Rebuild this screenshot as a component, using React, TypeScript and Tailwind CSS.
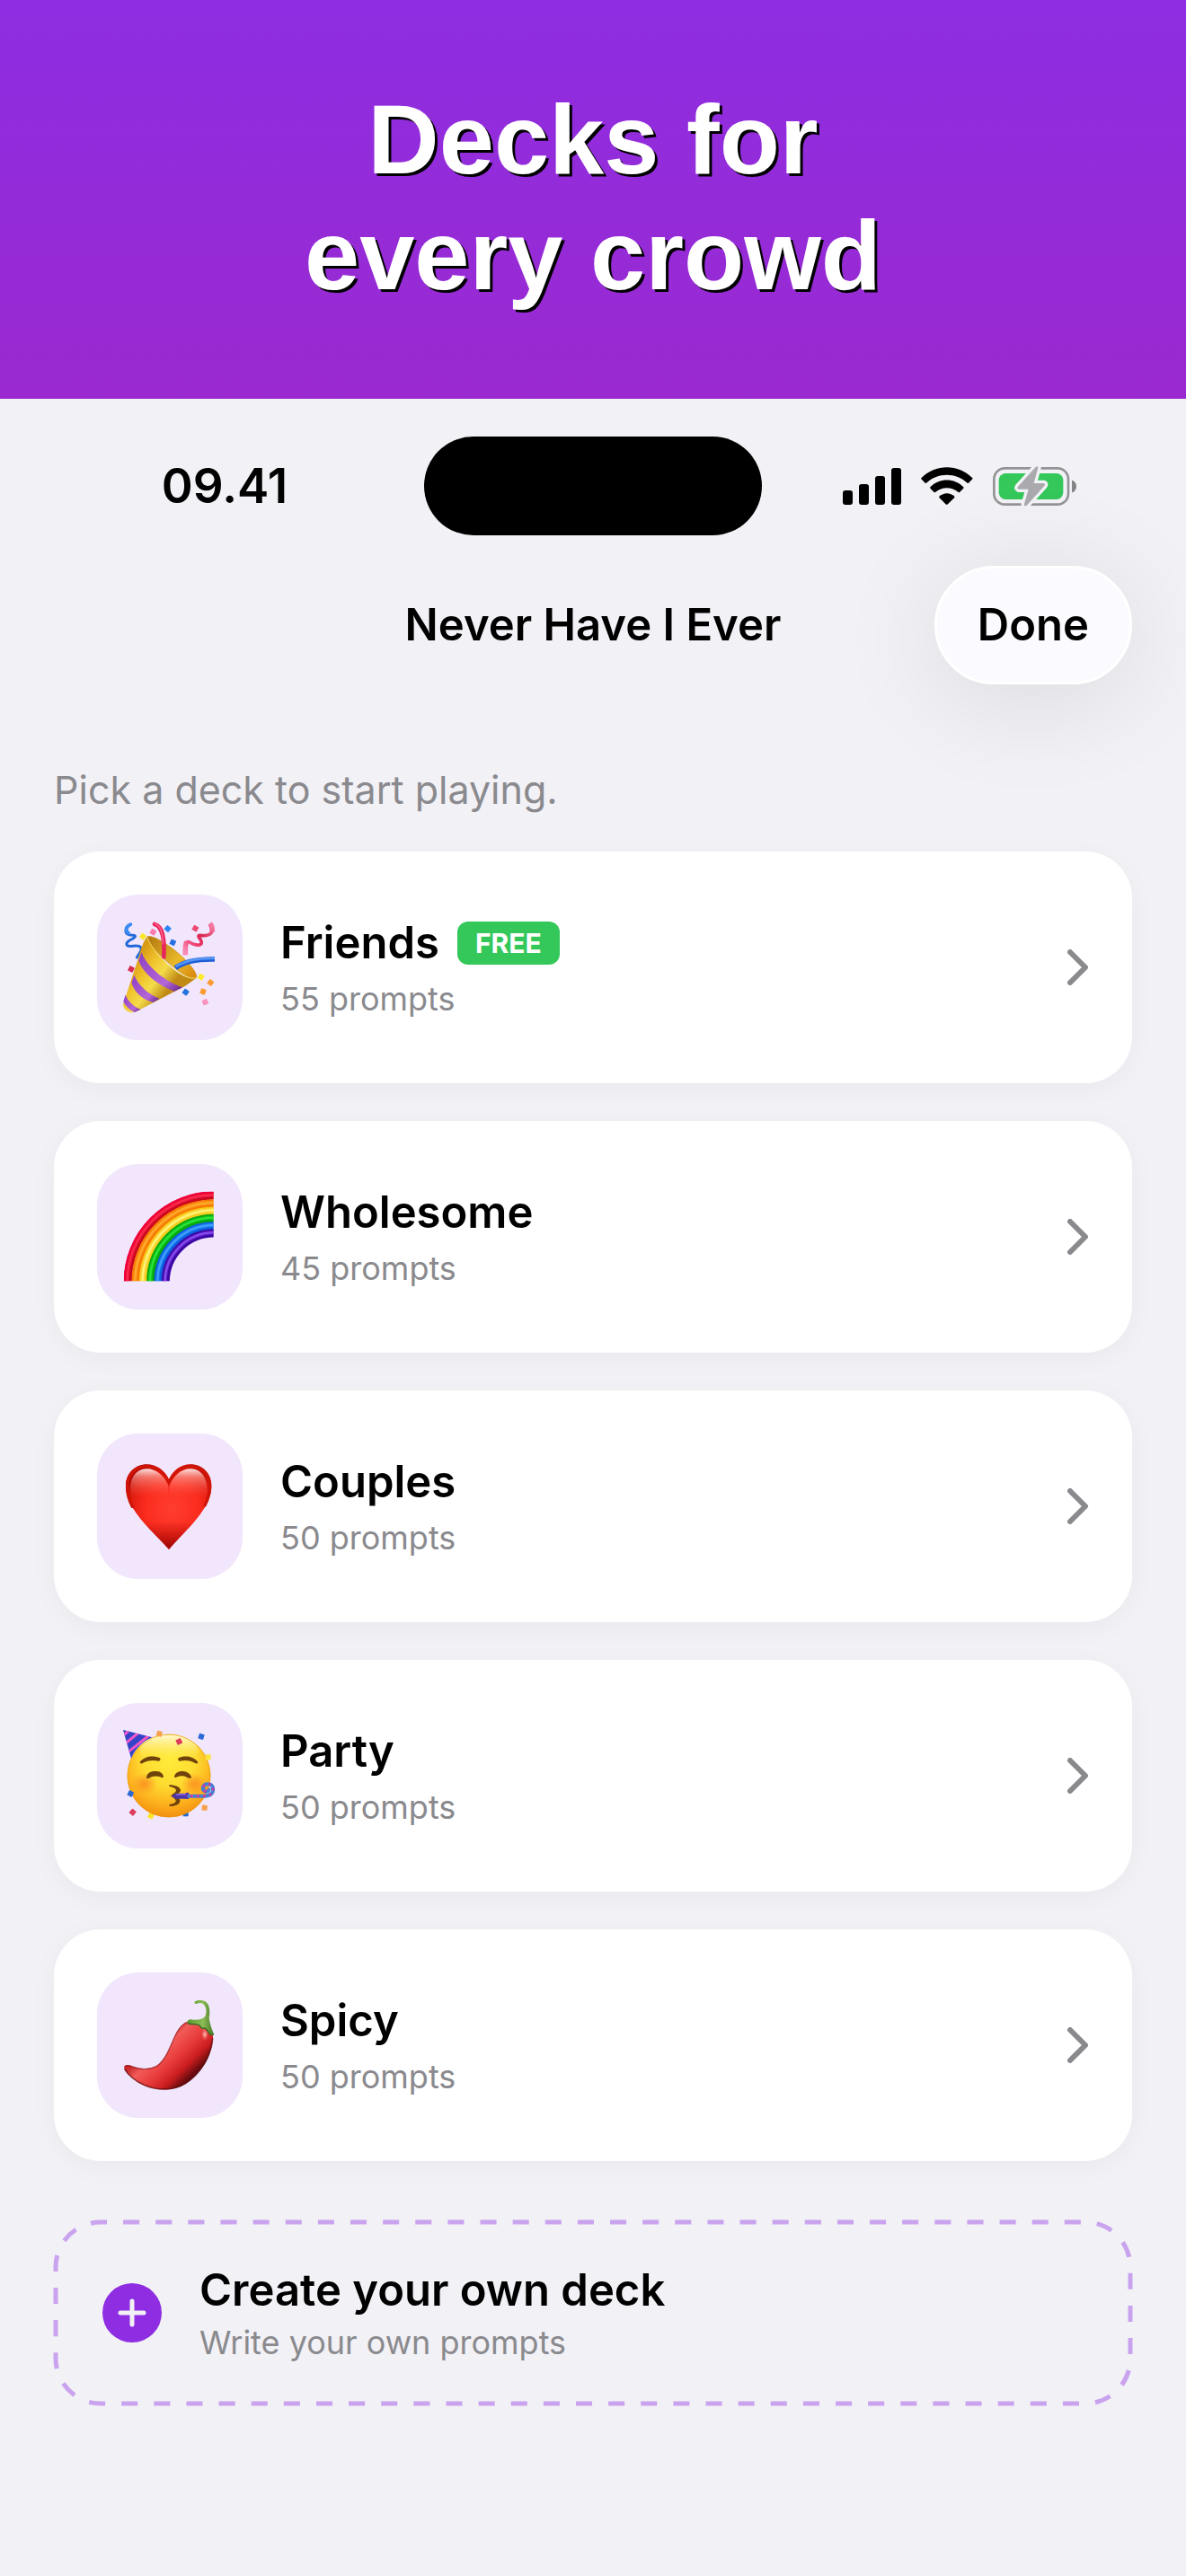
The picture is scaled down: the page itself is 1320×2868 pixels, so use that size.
import { useState } from 'react';
import type { ReactNode } from 'react';

type Deck = {
  id: string;
  name: string;
  prompts: number;
  free?: boolean;
  icon: ReactNode;
};

const TILE_VIEW_BOX = '54 48 486 486';

function Confetti({ x, y, fill, r = 0 }: { x: number; y: number; fill: string; r?: number }) {
  return <rect x={x - 9} y={y - 9} width="18" height="18" rx="2" fill={fill} transform={`rotate(${r} ${x} ${y})`} />;
}

function PopperIcon() {
  return (
    <svg viewBox={TILE_VIEW_BOX} className="size-full" aria-hidden="true">
      <defs>
        <linearGradient id="cone" x1="170" y1="280" x2="290" y2="370" gradientUnits="userSpaceOnUse">
          <stop offset="0" stopColor="#d99a16" />
          <stop offset=".35" stopColor="#f0c32c" />
          <stop offset=".65" stopColor="#f4dc4a" />
          <stop offset="1" stopColor="#c08a14" />
        </linearGradient>
        <linearGradient id="mouth" x1="230" y1="200" x2="380" y2="320" gradientUnits="userSpaceOnUse">
          <stop offset="0" stopColor="#b87e12" />
          <stop offset=".6" stopColor="#e9b92a" />
          <stop offset="1" stopColor="#d98a10" />
        </linearGradient>
        <linearGradient id="band" x1="0" y1="0" x2="1" y2="1">
          <stop offset="0" stopColor="#8d3fc4" />
          <stop offset=".7" stopColor="#b566d8" />
          <stop offset="1" stopColor="#5f1f86" />
        </linearGradient>
        <linearGradient id="pinkRibbon" x1="350" y1="240" x2="440" y2="150" gradientUnits="userSpaceOnUse">
          <stop offset="0" stopColor="#f98bb4" />
          <stop offset=".35" stopColor="#ee3a6c" />
          <stop offset=".6" stopColor="#d8284f" />
          <stop offset="1" stopColor="#f77fa8" />
        </linearGradient>
      </defs>
      <path d="M167 147C143 157 145 180 166 183C184 184 186 187 174 195C158 202 148 210 155 218C165 225 190 213 200 224C206 235 195 243 187 258" fill="none" stroke="#2169d8" strokeWidth="9" strokeLinecap="round" strokeLinejoin="round" />
      <path d="M165 148C149 156 149 171 160 177" fill="none" stroke="#3c8cf5" strokeWidth="11" strokeLinecap="round" />
      <path d="M221 189C234 182 268 200 303 226C346 258 390 306 386 325C382 335 355 325 318 297C268 258 214 206 221 189Z" fill="url(#mouth)" stroke="#c98f14" strokeWidth="2" />
      <path d="M221 188C208 205 199 233 194 254L142 412C139 426 153 443 170 442C180 441 190 436 199 431L351 352L386 326C362 336 316 308 282 274C250 242 226 210 221 188Z" fill="url(#cone)" />
      <path d="M203 240C217 286 278 337 340 358L312 371C257 352 206 309 193 268Z" fill="url(#band)" />
      <path d="M178 317C191 350 228 383 263 395L241 408C205 399 176 371 169 342Z" fill="url(#band)" />
      <path d="M149 383C157 404 178 424 200 431L180 441C162 433 146 417 142 404Z" fill="url(#band)" />
      <path d="M221 190C229 215 258 251 286 277C320 309 363 334 385 326" fill="none" stroke="#f8e06a" strokeWidth="3" />
      <path d="M246 147C272 154 280 190 277 256" fill="none" stroke="#e8265c" strokeWidth="14" strokeLinecap="round" />
      <path d="M248 145C268 154 274 180 274 212" fill="none" stroke="#fa5c88" strokeWidth="5" strokeLinecap="round" />
      <path d="M316 293C341 274 386 263 447 264" fill="none" stroke="#1e5fd6" strokeWidth="17" />
      <path d="M318 288C345 270 390 260 447 261" fill="none" stroke="#5696f6" strokeWidth="8" />
      <path d="M349 248C348 210 352 202 362 207C378 217 402 222 403 208C402 194 385 187 397 184C419 187 441 182 439 163Q438 152 432 145" fill="none" stroke="url(#pinkRibbon)" strokeWidth="11" strokeLinejoin="round" />
      <path d="M349 250C348 225 348 214 353 207M439 172Q440 155 431 144" fill="none" stroke="url(#pinkRibbon)" strokeWidth="17" />
      <Confetti x={207} y={188} fill="#fbe929" r={38} />
      <Confetti x={241} y={173} fill="#fb79ac" r={30} />
      <Confetti x={290} y={162} fill="#2d86f8" r={40} />
      <Confetti x={307} y={208} fill="#256fe0" r={25} />
      <Confetti x={382} y={161} fill="#ee4a76" r={30} />
      <Confetti x={168} y={297} fill="#d72c52" r={28} />
      <Confetti x={350} y={374} fill="#2572dc" r={35} />
      <Confetti x={401} y={323} fill="#fcec2c" r={28} />
      <Confetti x={433} y={342} fill="#fb9c32" r={38} />
      <Confetti x={408} y={372} fill="#fb9c32" r={22} />
      <Confetti x={415} y={407} fill="#fb92bd" r={-25} />
    </svg>
  );
}

const rainbowBands = [
  { r: 288, dark: '#cc0620', light: '#ff2a4e' },
  { r: 262, dark: '#f87a00', light: '#ffab2e' },
  { r: 237, dark: '#f7cb1c', light: '#fff37a' },
  { r: 212, dark: '#06a80c', light: '#2be63a' },
  { r: 187, dark: '#0a5fe0', light: '#3fa2ff' },
  { r: 162, dark: '#3c06a4', light: '#8a4cf2' },
];

function RainbowIcon() {
  return (
    <svg viewBox={TILE_VIEW_BOX} className="size-full" aria-hidden="true">
      <defs>
        <clipPath id="quarter">
          <rect x="143" y="140" width="300" height="299" />
        </clipPath>
      </defs>
      <g clipPath="url(#quarter)" fill="none">
        {rainbowBands.map((band) => (
          <g key={band.r}>
            <circle cx="445" cy="441" r={band.r} stroke={band.dark} strokeWidth="27" />
            <circle cx="445" cy="441" r={band.r + 2} stroke={band.light} strokeWidth="13" opacity=".45" />
            <circle cx="445" cy="441" r={band.r + 2} stroke={band.light} strokeWidth="6" />
          </g>
        ))}
        <circle cx="445" cy="441" r="299" stroke="#f5003c" strokeWidth="6" />
      </g>
    </svg>
  );
}

function HeartIcon() {
  return (
    <svg viewBox={TILE_VIEW_BOX} className="size-full" aria-hidden="true">
      <defs>
        <radialGradient id="heart" cx="305" cy="300" r="165" gradientUnits="userSpaceOnUse">
          <stop offset="0" stopColor="#ff3e30" />
          <stop offset=".55" stopColor="#fb2c1e" />
          <stop offset=".85" stopColor="#e01c10" />
          <stop offset="1" stopColor="#b80a04" />
        </radialGradient>
        <linearGradient id="gloss" x1="0" y1="163" x2="0" y2="262" gradientUnits="userSpaceOnUse">
          <stop offset="0" stopColor="#fff" stopOpacity=".95" />
          <stop offset=".3" stopColor="#ffb4aa" stopOpacity=".6" />
          <stop offset="1" stopColor="#ff5a4a" stopOpacity="0" />
        </linearGradient>
        <linearGradient id="tip" x1="0" y1="340" x2="0" y2="436" gradientUnits="userSpaceOnUse">
          <stop offset="0" stopColor="#a00400" stopOpacity="0" />
          <stop offset="1" stopColor="#8c0200" stopOpacity=".85" />
        </linearGradient>
      </defs>
      <path d="M294 435C250 386 204 346 175 299C160 275 150 249 150 222C150 181 181 151 220 151C253 151 280 171 294 201C308 171 333 151 366 151C406 151 436 182 436 224C436 253 425 277 410 301C381 347 337 387 294 435Z" fill="url(#heart)" />
      <path d="M294 435C250 386 204 346 175 299L410 301C381 347 337 387 294 435Z" fill="url(#tip)" />
      <path d="M172 292C160 270 154 247 155 222C156 182 184 157 220 157C254 157 282 183 294 213C306 183 332 157 366 157C404 157 431 184 431 224C431 248 424 268 414 288" fill="none" stroke="#cf1508" strokeWidth="10" strokeLinecap="round" />
      <path d="M166 250C160 200 183 166 220 166C252 166 277 190 292 221L292 260C250 285 195 285 166 250Z" fill="url(#gloss)" />
      <path d="M296 221C311 190 334 166 366 166C404 166 426 200 420 250C390 285 335 285 296 260Z" fill="url(#gloss)" />
    </svg>
  );
}

function PartyIcon() {
  return (
    <svg viewBox={TILE_VIEW_BOX} className="size-full" aria-hidden="true">
      <defs>
        <radialGradient id="face" cx="294" cy="235" r="200" gradientUnits="userSpaceOnUse">
          <stop offset="0" stopColor="#ffec3a" />
          <stop offset=".45" stopColor="#fedb30" />
          <stop offset=".75" stopColor="#fdb21e" />
          <stop offset="1" stopColor="#f28c0c" />
        </radialGradient>
        <linearGradient id="shine" x1="0" y1="153" x2="0" y2="235" gradientUnits="userSpaceOnUse">
          <stop offset="0" stopColor="#fffbe0" stopOpacity=".95" />
          <stop offset="1" stopColor="#fff27a" stopOpacity="0" />
        </linearGradient>
        <radialGradient id="cheek">
          <stop offset="0" stopColor="#fb8420" stopOpacity=".75" />
          <stop offset="1" stopColor="#fb8420" stopOpacity="0" />
        </radialGradient>
        <clipPath id="hat">
          <path d="M141 138L238 163C207 175 182 200 168 233Z" />
        </clipPath>
      </defs>
      <Confetti x={350} y={418} fill="#2268cc" />
      <Confetti x={234} y={425} fill="#fbe32c" r={25} />
      <circle cx="294" cy="291" r="139" fill="url(#face)" />
      <ellipse cx="294" cy="208" rx="98" ry="53" fill="url(#shine)" />
      <circle cx="294" cy="291" r="138" fill="none" stroke="#e8920e" strokeWidth="3" opacity=".6" />
      <ellipse cx="213" cy="318" rx="43" ry="36" fill="url(#cheek)" />
      <ellipse cx="379" cy="318" rx="43" ry="36" fill="url(#cheek)" />
      <g clipPath="url(#hat)">
        <rect x="135" y="130" width="110" height="110" fill="#3444c8" />
        <path d="M138 160L165 136M143 188L204 138M154 215L237 149" stroke="#f157c8" strokeWidth="9" />
      </g>
      <g fill="#70430c">
        <path d="M198 244C214 225 243 222 264 232C267 237 265 241 260 242C238 238 221 241 205 250C200 252 196 249 198 244Z" />
        <path d="M390 244C374 225 345 222 326 232C323 237 325 241 330 242C352 238 367 241 383 250C388 252 392 249 390 244Z" />
        <path d="M219 296C223 277 239 275 252 276C267 277 274 284 276 295C273 301 267 295 262 294C251 290 237 293 228 299C223 301 219 300 219 296Z" />
        <path d="M312 293C316 278 330 275 342 276C356 278 366 285 369 296C367 302 360 299 354 296C344 291 331 290 322 295C316 298 312 297 312 293Z" />
        <path d="M296 322C316 322 332 329 333 340C333 347 324 352 312 358C325 363 333 370 331 377C328 388 313 393 297 393C293 390 295 387 299 386C311 384 318 379 317 374C315 367 305 363 301 358C306 352 318 347 318 340C317 333 309 330 297 327C293 325 293 322 296 322Z" />
      </g>
      <path d="M301 359L317 350H357V368H317Z" fill="#4b36a4" />
      <path d="M317 351H352V357H317Z" fill="#7a58d8" />
      <rect x="350" y="347" width="11" height="22" rx="4" fill="#5a38ae" />
      <path d="M361 359H412C434 359 444 347 441 331C437 316 413 314 408 329C405 344 423 348 428 337" fill="none" stroke="#477fd4" strokeWidth="12" strokeLinecap="round" />
      <path d="M366 359H412C434 359 444 347 441 331C437 316 413 314 408 329C405 344 423 348 428 337" fill="none" stroke="#d7359e" strokeWidth="8" strokeDasharray="8 13" />
      <circle cx="420" cy="333" r="5" fill="#f0872e" />
      <Confetti x={262} y={151} fill="#f6a14c" r={14} />
      <Confetti x={328} y={177} fill="#dd3c5e" r={-25} />
      <Confetti x={402} y={160} fill="#2c6ad6" r={18} />
      <Confetti x={425} y={229} fill="#fbe640" r={4} />
      <Confetti x={166} y={351} fill="#2b68cf" r={28} />
      <Confetti x={173} y={413} fill="#dd3c5e" r={40} />
      <Confetti x={413} y={398} fill="#f6a14c" r={5} />
    </svg>
  );
}

function ChiliIcon() {
  return (
    <svg viewBox={TILE_VIEW_BOX} className="size-full" aria-hidden="true">
      <defs>
        <linearGradient id="chili" x1="265" y1="270" x2="375" y2="385" gradientUnits="userSpaceOnUse">
          <stop offset="0" stopColor="#c92a2c" />
          <stop offset=".2" stopColor="#f25a58" />
          <stop offset=".5" stopColor="#e83c3c" />
          <stop offset=".78" stopColor="#cb1d20" />
          <stop offset="1" stopColor="#6c0c0e" />
        </linearGradient>
        <radialGradient id="glint">
          <stop offset="0" stopColor="#ffd0c8" />
          <stop offset="1" stopColor="#f25a58" stopOpacity="0" />
        </radialGradient>
        <linearGradient id="stem" x1="360" y1="0" x2="440" y2="0" gradientUnits="userSpaceOnUse">
          <stop offset="0" stopColor="#5c9c34" />
          <stop offset=".6" stopColor="#8cbc54" />
          <stop offset="1" stopColor="#4a7e2a" />
        </linearGradient>
      </defs>
      <path d="M145 362C150 354 162 357 172 362C197 371 228 373 252 361C286 338 298 292 317 254C331 226 350 208 377 210C416 210 444 235 441 269C437 326 404 384 350 420C309 446 255 444 214 427C181 413 155 389 145 371Z" fill="url(#chili)" />
      <path d="M145 364C153 357 162 358 172 363C197 372 228 374 252 362C286 339 298 293 317 255C331 227 350 211 372 211" fill="none" stroke="#8d1517" strokeWidth="4" opacity=".65" />
      <path d="M146 371C158 391 181 411 214 425C255 442 309 444 349 419C402 384 436 325 440 268" fill="none" stroke="#4f0809" strokeWidth="5" opacity=".6" />
      <ellipse cx="414" cy="255" rx="13" ry="22" fill="url(#glint)" />
      <path d="M380 146C386 139 406 140 415 145C431 155 432 180 428 202C431 220 437 239 444 254C440 260 433 259 427 250C423 242 419 236 413 236C407 240 403 238 399 230C393 223 383 223 376 222C366 224 357 222 355 215C356 204 366 203 375 206C393 208 408 203 415 195C421 179 419 162 408 153C401 149 393 150 387 153C381 153 378 150 380 146Z" fill="url(#stem)" />
      <path d="M356 218C366 223 386 219 396 225C400 230 402 238 412 234C421 234 424 248 432 255C437 258 441 257 443 254" fill="none" stroke="#3a6420" strokeWidth="4" />
    </svg>
  );
}

function SignalIcon() {
  return (
    <svg viewBox="231 180 195 123" className="h-[41px] w-[65px]" aria-hidden="true">
      <rect x="231" y="255" width="33" height="48" rx="9" />
      <rect x="285" y="234" width="33" height="69" rx="9" />
      <rect x="339" y="207" width="33" height="96" rx="9" />
      <rect x="393" y="180" width="33" height="123" rx="9" />
    </svg>
  );
}

function WifiIcon() {
  return (
    <svg viewBox="494 177 174 126" className="h-[42px] w-[58px]" aria-hidden="true">
      <path d="M495 214C542 166 619 166 666 214Q667 216 666 217L653 230Q651 232 649 230C610 194 551 194 512 230Q510 232 508 230L495 217Q494 216 495 214Z" />
      <path d="M525 244C556 213 605 213 636 244Q637 246 636 248L623 261Q621 263 619 261C597 242 564 242 542 261Q540 263 538 261L525 248Q524 246 525 244Z" />
      <path d="M555 275C570 261 592 261 606 275Q607 277 606 279L582 302Q580 303 578 302L555 279Q554 277 555 275Z" />
    </svg>
  );
}

const BOLT = 'M883 175Q887 175 886 180L872 231H905Q912 233 907 240L848 305Q844 308 841 306Q839 304 840 300L854 251H821Q815 249 819 242L878 177Z';

function BatteryIcon() {
  return (
    <svg viewBox="735 174 279 135" className="h-[45px] w-[93px]" aria-hidden="true">
      <rect x="739" y="181" width="248" height="121" rx="36" fill="none" stroke="#949496" strokeWidth="8" />
      <path d="M999 221C1019 225 1019 258 999 262Z" fill="#858587" />
      <rect x="755" y="198" width="215" height="87" rx="23" fill="#34c759" />
      <path d={BOLT} fill="#f2f1f6" stroke="#f2f1f6" strokeWidth="20" strokeLinejoin="round" />
      <path d={BOLT} fill="#a9a9ae" />
    </svg>
  );
}

function Chevron() {
  return (
    <svg viewBox="0 0 24 40" className="h-10 w-6 shrink-0" fill="none" stroke="#8a8a8e" strokeWidth="6" strokeLinecap="round" strokeLinejoin="round" aria-hidden="true">
      <path d="M3 3L20 20L3 37" />
    </svg>
  );
}

const decks: Deck[] = [
  { id: 'friends', name: 'Friends', prompts: 55, free: true, icon: <PopperIcon /> },
  { id: 'wholesome', name: 'Wholesome', prompts: 45, icon: <RainbowIcon /> },
  { id: 'couples', name: 'Couples', prompts: 50, icon: <HeartIcon /> },
  { id: 'party', name: 'Party', prompts: 50, icon: <PartyIcon /> },
  { id: 'spicy', name: 'Spicy', prompts: 50, icon: <ChiliIcon /> },
];

function DeckCard({ deck, onSelect }: { deck: Deck; onSelect: () => void }) {
  return (
    <button
      type="button"
      onClick={onSelect}
      className="flex w-full items-center gap-[42px] rounded-[52px] bg-white p-12 text-left shadow-[0_6px_30px_rgba(0,0,0,0.04)]"
    >
      <span className="size-[162px] shrink-0 overflow-hidden rounded-[46px] bg-[#f1e6fc]">{deck.icon}</span>
      <span className="flex flex-1 flex-col gap-1.5">
        <span className="flex items-center gap-5">
          <span className="text-[49px] leading-[64px] font-semibold text-black">{deck.name}</span>
          {deck.free && (
            <span className="rounded-xl bg-[#34c759] px-5 text-[30px] leading-[48px] font-bold text-white">FREE</span>
          )}
        </span>
        <span className="text-[36px] leading-[48px] text-[#8a8a8e]">{deck.prompts} prompts</span>
      </span>
      <Chevron />
    </button>
  );
}

export default function App() {
  const [, setSelected] = useState<string | null>(null);

  return (
    <div className="min-h-screen overflow-x-hidden bg-[#f2f1f6] pb-40 font-['Inter',sans-serif] text-black">
      <header className="bg-linear-to-b from-[#8e2de2] to-[#9a29d0] pt-[90px] pb-24 text-center">
        <h1 className="font-['Liberation_Sans',Arial,sans-serif] text-[110px] leading-[129px] font-bold text-white [text-shadow:3px_3px_0_#000]">
          Decks for
          <br />
          every crowd
        </h1>
      </header>

      <div className="grid grid-cols-[1fr_auto_1fr] items-center pt-[42px]">
        <span className="pl-7 text-center text-[53px] leading-[64px] font-semibold">09.41</span>
        <span className="h-[110px] w-[376px] rounded-full bg-black" />
        <span className="flex items-center justify-center gap-[22px] pr-8">
          <SignalIcon />
          <WifiIcon />
          <BatteryIcon />
        </span>
      </div>

      <nav className="grid grid-cols-[1fr_auto_1fr] items-center px-[60px] pt-[34px]">
        <h2 className="col-start-2 text-[49px] leading-[64px] font-semibold">Never Have I Ever</h2>
        <button
          type="button"
          onClick={() => setSelected(null)}
          className="h-[132px] justify-self-end rounded-full border-[3px] border-white bg-[#fbfbff] px-[45px] text-[49px] leading-[64px] font-semibold shadow-[0_16px_120px_rgba(0,0,0,0.1)]"
        >
          Done
        </button>
      </nav>

      <main className="px-[60px] pt-[87px]">
        <p className="text-[43px] leading-[60px] text-[#8a8a8e]">Pick a deck to start playing.</p>

        <ul className="mt-[39px] flex flex-col gap-[42px]">
          {decks.map((deck) => (
            <li key={deck.id}>
              <DeckCard deck={deck} onSelect={() => setSelected(deck.id)} />
            </li>
          ))}
        </ul>

        <button
          type="button"
          onClick={() => setSelected('custom')}
          className="relative mt-[66px] flex w-full items-center gap-[42px] px-[54px] py-[46px] text-left"
        >
          <svg className="absolute inset-0 size-full overflow-visible p-[2px]" aria-hidden="true">
            <rect width="100%" height="100%" rx="50" fill="none" stroke="#caa3ee" strokeWidth="5" pathLength="2700" strokeDasharray="18 18" strokeDashoffset="11" />
          </svg>
          <svg viewBox="0 0 66 66" className="size-[66px] shrink-0" aria-hidden="true">
            <circle cx="33" cy="33" r="33" fill="#8e2de2" />
            <path d="M33 20V46M20 33H46" stroke="#f2f1f6" strokeWidth="5" strokeLinecap="round" />
          </svg>
          <span className="flex flex-col gap-0.5">
            <span className="text-[49px] leading-[64px] font-semibold text-black">Create your own deck</span>
            <span className="text-[36px] leading-[48px] text-[#8a8a8e]">Write your own prompts</span>
          </span>
        </button>
      </main>
    </div>
  );
}
